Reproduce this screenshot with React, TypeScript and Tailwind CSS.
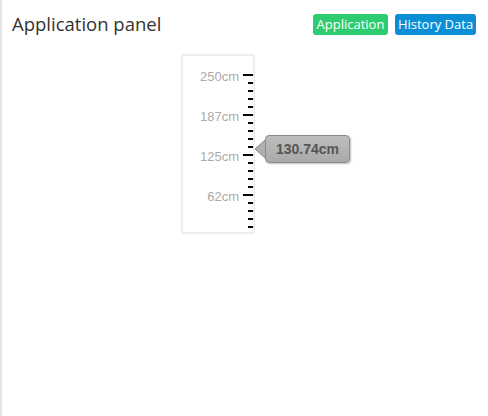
import React from "react";

const ticks = Array.from({ length: 20 }, (_, i) => i);

export default function App() {
  return (
    <div className="w-[488px] h-[416px] bg-white border-l-2 border-[#e6e6e6] overflow-hidden" style={{ fontFamily: '"Open Sans", "Liberation Sans", sans-serif' }}>
      <div className="flex items-start justify-between pl-[10px] pr-[12px] pt-[11px]">
        <div className="text-[18.5px] leading-[25px] text-[#333]">Application panel</div>
        <div className="flex gap-[7px] pt-[3px]">
          <div className="w-[75px] h-[21px] rounded-[3px] bg-[#2ecc71] text-white text-[13px] leading-[21px] text-center">Application</div>
          <div className="w-[81px] h-[21px] rounded-[3px] bg-[#0a8fd6] text-white text-[13px] leading-[21px] text-center">History Data</div>
        </div>
      </div>
      <div className="relative ml-[179px] mt-[18px] w-[74px] h-[180px] border-2 border-[#eeeeee]">
        <div className="flex h-full">
          <div className="w-[56px] pt-[1px] flex flex-col" style={{ fontFamily: '"Liberation Sans", Arial, sans-serif' }}>
            {["250cm", "187cm", "125cm", "62cm"].map((l) => (
              <div key={l} className="h-[40px] flex items-center justify-end text-[13px] text-[#aaaaaa]">
                {l}
              </div>
            ))}
          </div>
          <svg width="14" height="176" className="block">
            {ticks.map((i) => {
              const y = 19 + i * 8;
              const major = i % 5 === 0;
              return <rect key={i} x={major ? 4 : 9} y={y - 1} width={major ? 10 : 5} height={2} fill="#000" />;
            })}
          </svg>
        </div>
        <div className="absolute left-[71px] top-[79px] flex items-center">
          <svg width="12" height="28" className="block -mr-[1px] relative z-10">
            <polygon points="11,5 1,14 11,23" fill="#b0b0b0" />
            <polyline points="11,5 1,14 11,23" fill="none" stroke="#8a8a8a" strokeWidth="1" />
          </svg>
          <div className="w-[85px] h-[28px] rounded-[4px] border border-[#8a8a8a] bg-gradient-to-b from-[#bdbdbd] to-[#a9a9a9] shadow-[1px_1px_2px_rgba(0,0,0,0.25)] flex items-center justify-center text-[14px] font-bold text-[#555]" style={{ fontFamily: '"Liberation Sans", Arial, sans-serif' }}>
            130.74cm
          </div>
        </div>
      </div>
    </div>
  );
}
